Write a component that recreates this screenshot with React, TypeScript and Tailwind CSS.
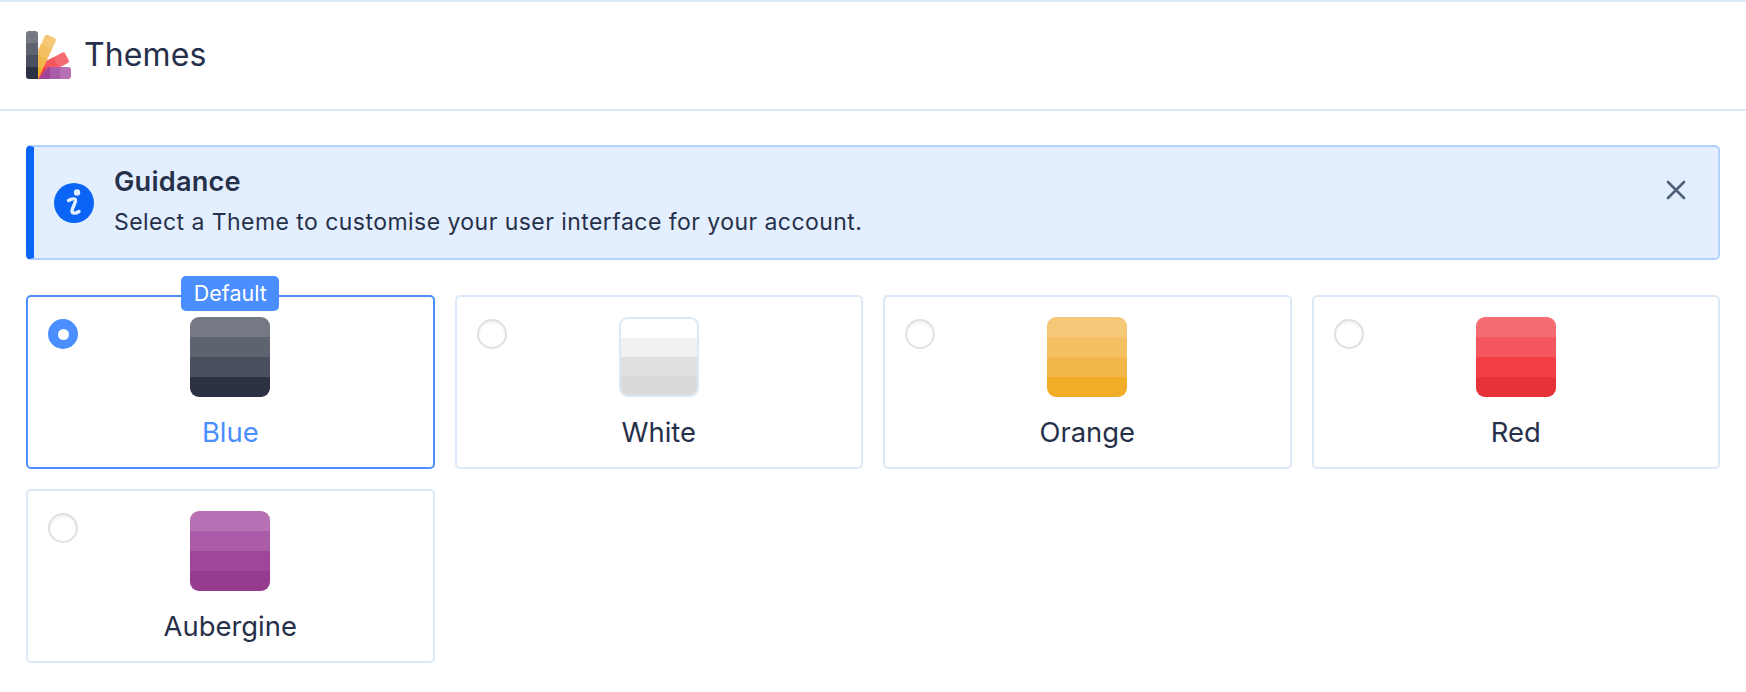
const themes = [
  { name: 'Blue', selected: true, bands: ['bg-[#757984]', 'bg-[#5e6370]', 'bg-[#4a4f5f]', 'bg-[#2c3144]'] },
  { name: 'White', selected: false, bands: ['bg-[#ffffff]', 'bg-[#f1f1f1]', 'bg-[#e0e0e0]', 'bg-[#dadada]'] },
  { name: 'Orange', selected: false, bands: ['bg-[#f5c877]', 'bg-[#f4c062]', 'bg-[#f2b64a]', 'bg-[#f1ad27]'] },
  { name: 'Red', selected: false, bands: ['bg-[#f56c73]', 'bg-[#f4575e]', 'bg-[#f23e45]', 'bg-[#e63338]'] },
  { name: 'Aubergine', selected: false, bands: ['bg-[#b670b3]', 'bg-[#ab5ca8]', 'bg-[#a1459a]', 'bg-[#963c8f]'] },
]

function ThemesLogo() {
  return (
    <svg width="46" height="48" viewBox="26 31 46 48" className="shrink-0">
      <defs>
        <clipPath id="fan">
          <rect x="36" y="28" width="40" height="52" />
        </clipPath>
      </defs>
      <g clipPath="url(#fan)">
        <g transform="translate(38 79) rotate(62)">
          <rect x="-12" y="-36" width="12" height="36" rx="2.5" fill="#f56c73" />
          <rect x="-12" y="-24" width="12" height="12" fill="#f4575e" />
          <rect x="-12" y="-12" width="12" height="12" fill="#f23e45" />
        </g>
        <g transform="translate(38 79) rotate(25)">
          <rect x="-12" y="-44" width="12" height="44" rx="2.5" fill="#f5c877" />
          <rect x="-12" y="-33" width="12" height="11" fill="#f4c062" />
          <rect x="-12" y="-22" width="12" height="11" fill="#f2b64a" />
          <rect x="-12" y="-11" width="12" height="11" fill="#f1ad27" />
        </g>
      </g>
      <path d="M48 67h20a3 3 0 0 1 3 3v6a3 3 0 0 1-3 3H39z" fill="#b670b3" />
      <path d="M48 67h12v12H39z" fill="#ab5ca8" />
      <path d="M48 67h2v12H39z" fill="#a1459a" />
      <path d="M26 43v-9a3 3 0 0 1 3-3h6a3 3 0 0 1 3 3v9z" fill="#757984" />
      <rect x="26" y="43" width="12" height="12" fill="#5e6370" />
      <rect x="26" y="55" width="12" height="12" fill="#4a4f5f" />
      <path d="M26 67h12v12h-9a3 3 0 0 1-3-3z" fill="#2c3144" />
    </svg>
  )
}

function InfoIcon() {
  return (
    <svg width="40" height="40" viewBox="0 0 40 40" className="shrink-0">
      <circle cx="20" cy="20" r="20" fill="#0a64f5" />
      <circle cx="23" cy="9.5" r="3.2" fill="#e3efff" />
      <path
        d="M14.5 17.5C17 16 22 14.5 21.5 18C21 21 18 25 18 28C18 31 22 30.5 25 28.5"
        fill="none"
        stroke="#e3efff"
        strokeWidth="3.4"
        strokeLinecap="round"
      />
    </svg>
  )
}

export default function App() {
  return (
    <div className="min-h-[692px] bg-white font-['Inter',sans-serif] text-[#27304a]">
      {/* Header */}
      <div className="flex h-[111px] items-center gap-[12px] border-y-2 border-[#dce8f7] pb-[2px] pl-[26px]">
        <ThemesLogo />
        <h1 className="text-[32px] font-normal tracking-[0.1px]">Themes</h1>
      </div>

      <div className="px-[26px] pt-[34px]">
        {/* Guidance */}
        <div className="flex h-[115px] items-center rounded-[5px] border-2 border-l-8 border-[#b3d1ff] border-l-[#0a64f5] bg-[#e3efff] pl-5 pr-[32px]">
          <InfoIcon />
          <div className="ml-[20px] flex-1 -translate-y-px">
            <div className="text-[27.2px] leading-[40px] font-semibold tracking-[0.2px]">Guidance</div>
            <div className="text-[23px] leading-[40px] tracking-[0.45px]">
              Select a Theme to customise your user interface for your account.
            </div>
          </div>
          <svg width="20" height="20" viewBox="0 0 20 20" className="mb-[26px] shrink-0">
            <path d="M2 2L18 18M18 2L2 18" stroke="#52617a" strokeWidth="2.6" strokeLinecap="round" />
          </svg>
        </div>

        {/* Theme cards */}
        <div className="mt-[35px] grid grid-cols-4 gap-5">
          {themes.map((theme) => (
            <div
              key={theme.name}
              className={`relative flex h-[174px] flex-col items-center rounded-[5px] border-2 pt-[20px] ${
                theme.selected ? 'border-[#4a8eff]' : 'border-[#dce8f7]'
              }`}
            >
              {theme.selected && (
                <span className="absolute -top-[21px] left-1/2 flex h-[35px] w-[98px] -translate-x-1/2 items-center justify-center rounded-[5px] bg-[#4a8eff] pb-px text-[21.5px] text-white">
                  Default
                </span>
              )}
              {theme.selected ? (
                <span className="absolute top-[22px] left-[20px] flex h-[30px] w-[30px] items-center justify-center rounded-full bg-[#4a8eff]">
                  <span className="h-[11px] w-[11px] rounded-full bg-white" />
                </span>
              ) : (
                <span className="absolute top-[22px] left-[20px] h-[30px] w-[30px] rounded-full border-2 border-[#e0e0e0] shadow-[inset_0_2px_3px_rgba(0,0,0,0.05)]" />
              )}
              <div
                className={`h-[80px] w-[80px] overflow-hidden rounded-[9px] ${
                  theme.name === 'White' ? 'border-2 border-[#dce8f7]' : ''
                }`}
              >
                {theme.bands.map((band) => (
                  <div key={band} className={`h-1/4 ${band}`} />
                ))}
              </div>
              <div
                className={`mt-[17px] text-[27.4px] leading-[36px] ${
                  theme.selected ? 'text-[#4a8eff]' : ''
                }`}
              >
                {theme.name}
              </div>
            </div>
          ))}
        </div>
      </div>
    </div>
  )
}
